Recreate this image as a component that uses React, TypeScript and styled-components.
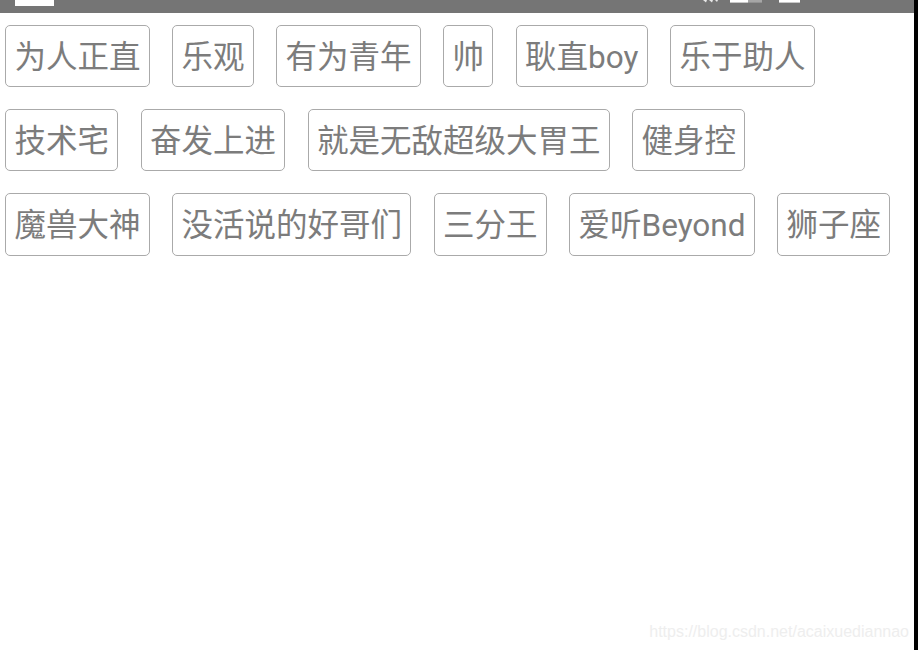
import React from "react";
import styled, { createGlobalStyle } from "styled-components";

const Global = createGlobalStyle`
  html, body { margin: 0; padding: 0; background: #000; }
  #root { width: 918px; height: 650px; overflow: hidden; }
`;

const Screen = styled.div`
  position: relative;
  display: flex;
  width: 918px;
  height: 650px;
  background: #000;
`;

const Phone = styled.main`
  width: 914px;
  height: 650px;
  background: #fff;
  display: flex;
  flex-direction: column;
`;

const StatusBar = styled.header`
  height: 13px;
  flex: none;
  background: #757575;
  display: flex;
  align-items: flex-start;
  padding-left: 15px;
`;

const ClockStub = styled.div`
  width: 39px;
  height: 6px;
  background: #fff;
`;

const StatusIcons = styled.svg`
  margin-left: 645px;
  width: 105px;
  height: 6px;
  flex: none;
`;

const TagList = styled.div`
  display: flex;
  flex-direction: column;
  gap: 22px;
  padding: 12px 0 0 5px;
`;

const TagRow = styled.div`
  display: flex;
  gap: 22.25px;
`;

const Tag = styled.span`
  box-sizing: border-box;
  height: 62.2px;
  padding: 0 8.4px 4px;
  display: flex;
  align-items: center;
  border: 1px solid #aaaaaa;
  border-radius: 5px;
  font-family: "Roboto", "Noto Sans CJK SC", sans-serif;
  font-size: 31.5px;
  color: #7c7c7c;
  white-space: nowrap;
`;

const Watermark = styled.div`
  position: absolute;
  right: 9px;
  bottom: 8px;
  font-family: "Liberation Sans", sans-serif;
  font-size: 16px;
  line-height: 20px;
  color: #eeeeee;
`;

const rows = [
  ["为人正直", "乐观", "有为青年", "帅", "耿直boy", "乐于助人"],
  ["技术宅", "奋发上进", "就是无敌超级大胃王", "健身控"],
  ["魔兽大神", "没活说的好哥们", "三分王", "爱听Beyond", "狮子座"],
];

export default function App() {
  return (
    <Screen>
      <Global />
      <Phone>
        <StatusBar>
          <ClockStub />
          <StatusIcons viewBox="0 0 105 6">
            <path d="M4 0 L7 2.5 L8 0 Z M10 0 L13 2.5 L14 0 Z M16 0 L18 2 L19 0 Z" fill="#e8e8e8" />
            <rect x="31" y="0" width="18" height="2.6" fill="#fff" />
            <rect x="49" y="0" width="14" height="2.6" fill="#a6a6a6" />
            <rect x="80" y="0" width="21" height="2.6" fill="#fff" />
          </StatusIcons>
        </StatusBar>
        <TagList>
          {rows.map((row, i) => (
            <TagRow key={i}>
              {row.map((t) => (
                <Tag key={t}>{t}</Tag>
              ))}
            </TagRow>
          ))}
        </TagList>
      </Phone>
      <Watermark>https://blog.csdn.net/acaixuediannao</Watermark>
    </Screen>
  );
}
